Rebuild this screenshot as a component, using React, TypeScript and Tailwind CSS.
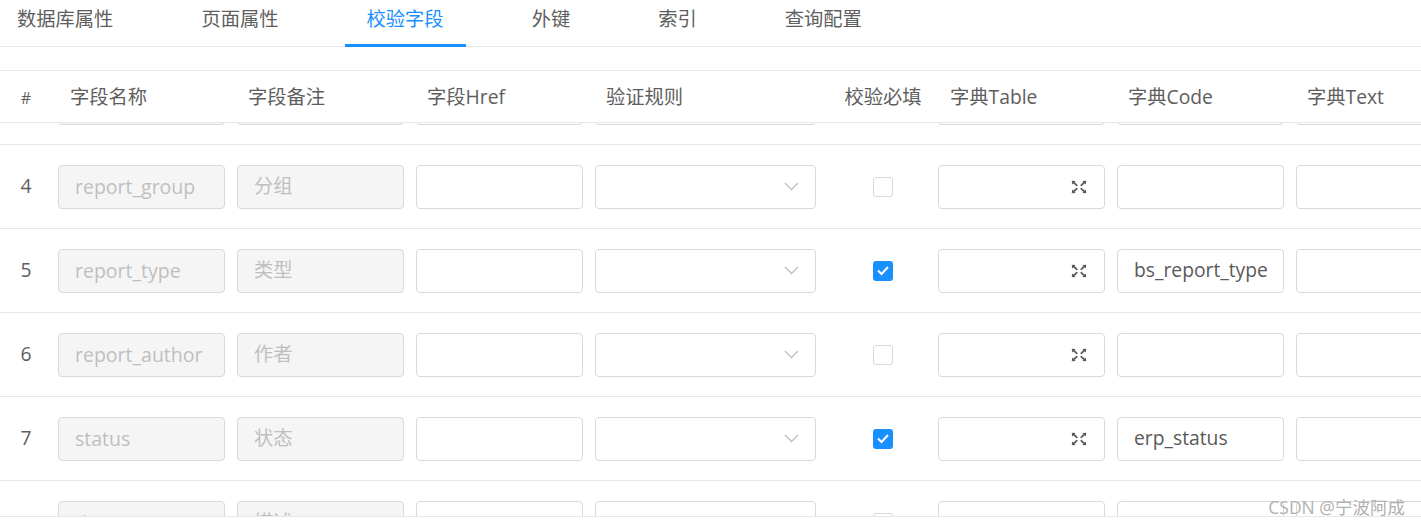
import React from "react";

const FONT = "'Open Sans', 'Noto Sans CJK SC', 'Noto Sans', sans-serif";

type Row = {
  n: string;
  name: string;
  remark: string;
  checked: boolean;
  code: string;
};

const rows: Row[] = [
  { n: "", name: "", remark: "", checked: false, code: "" },
  { n: "4", name: "report_group", remark: "分组", checked: false, code: "" },
  { n: "5", name: "report_type", remark: "类型", checked: true, code: "bs_report_type" },
  { n: "6", name: "report_author", remark: "作者", checked: false, code: "" },
  { n: "7", name: "status", remark: "状态", checked: true, code: "erp_status" },
  { n: "", name: "description", remark: "描述", checked: false, code: "" },
];

const tabs = ["数据库属性", "页面属性", "校验字段", "外键", "索引", "查询配置"];

function Box({
  children,
  disabled,
  className = "",
}: {
  children?: React.ReactNode;
  disabled?: boolean;
  className?: string;
}) {
  return (
    <div
      className={
        "h-[44px] w-full rounded-[4px] border border-[#d9d9d9] px-[16px] flex items-center whitespace-nowrap overflow-hidden " +
        (disabled ? "bg-[#f5f5f5] text-[#bfbfbf] " : "bg-white text-[#595959] ") +
        className
      }
    >
      {children}
    </div>
  );
}

function Chevron() {
  return (
    <svg width="15" height="9" viewBox="0 0 15 9" className="ml-auto shrink-0">
      <path d="M1 1 L7.5 7.5 L14 1" fill="none" stroke="#bfbfbf" strokeWidth="1.3" />
    </svg>
  );
}

function ExpandIcon() {
  return (
    <svg width="16" height="14" viewBox="0 0 16 14" className="ml-auto shrink-0">
      <g stroke="#595959" strokeWidth="1.7" fill="none" strokeLinecap="round">
        <path d="M2.2 2 L5.8 5.3" />
        <path d="M13.8 2 L10.2 5.3" />
        <path d="M2.2 12 L5.8 8.7" />
        <path d="M13.8 12 L10.2 8.7" />
      </g>
      <g fill="#595959">
        <path d="M0.8 0.8 L4.6 1.1 L1.1 4.6 Z" />
        <path d="M15.2 0.8 L11.4 1.1 L14.9 4.6 Z" />
        <path d="M0.8 13.2 L4.6 12.9 L1.1 9.4 Z" />
        <path d="M15.2 13.2 L11.4 12.9 L14.9 9.4 Z" />
      </g>
    </svg>
  );
}

function Checkbox({ checked }: { checked: boolean }) {
  if (checked) {
    return (
      <div className="w-[20px] h-[20px] shrink-0 rounded-[3px] bg-[#1890ff] flex items-center justify-center">
        <svg width="14" height="11" viewBox="0 0 14 11">
          <path d="M2 5.5 L5.5 9 L12 2" fill="none" stroke="#fff" strokeWidth="2" />
        </svg>
      </div>
    );
  }
  return <div className="w-[20px] h-[20px] shrink-0 rounded-[3px] border border-[#d9d9d9] bg-white" />;
}

const cols = "grid grid-cols-[52px_179px_179px_179px_233px_110px_179px_179px_179px]";

export default function App() {
  return (
    <div
      className="relative w-[1421px] h-[525px] overflow-hidden bg-white text-[19.3px] text-[#5e5e5e]"
      style={{ fontFamily: FONT }}
    >
      {/* Tabs */}
      <div className="h-[47px] border-b border-[#e8e8e8] flex">
        <div className="flex gap-[44px] ml-[-5px] h-full">
          {tabs.map((t, i) => (
            <div
              key={t}
              className={
                "relative h-full px-[22px] pb-[8px] flex items-center whitespace-nowrap " +
                (i === 2 ? "text-[#1890ff]" : "text-[#5e5e5e]")
              }
            >
              {t}
              {i === 2 && (
                <div className="absolute left-0 right-0 bottom-[-1px] h-[3px] bg-[#1890ff]" />
              )}
            </div>
          ))}
        </div>
      </div>

      <div className="h-[23px]" />

      {/* Table */}
      <div className="border-t border-[#e8e8e8]">
        {/* Header */}
        <div className={cols + " h-[52px] border-b border-[#e8e8e8] items-center whitespace-nowrap pt-[2px]"}>
          <div className="text-center text-[16px]">#</div>
          <div className="pl-[18px]">字段名称</div>
          <div className="pl-[17px]">字段备注</div>
          <div className="pl-[17px]">字段Href</div>
          <div className="pl-[17px]">验证规则</div>
          <div className="pl-[12px] flex justify-center">校验必填</div>
          <div className="pl-[18px]">字典Table</div>
          <div className="pl-[17px]">字典Code</div>
          <div className="pl-[17px]">字典Text</div>
        </div>

        {/* Body (scrolled) */}
        <div className="h-[394px] overflow-hidden border-b border-[#e8e8e8]">
          <div className="mt-[-62px]">
            {rows.map((r, idx) => (
              <div key={idx} className={cols + " h-[84px] border-b border-[#e8e8e8] items-center"}>
                <div className="text-center">{r.n}</div>
                <div className="px-[6px]">
                  <Box disabled className="text-[19.5px]">{r.name}</Box>
                </div>
                <div className="px-[6px]">
                  <Box disabled>{r.remark}</Box>
                </div>
                <div className="px-[6px]">
                  <Box />
                </div>
                <div className="px-[6px]">
                  <Box className="pr-[16px]">
                    <Chevron />
                  </Box>
                </div>
                <div className="pl-[12px] flex justify-center">
                  <Checkbox checked={r.checked} />
                </div>
                <div className="px-[6px]">
                  <Box className="pr-[17px]">
                    <ExpandIcon />
                  </Box>
                </div>
                <div className="px-[6px]">
                  <Box>{r.code}</Box>
                </div>
                <div className="px-[6px]">
                  <Box />
                </div>
              </div>
            ))}
          </div>
        </div>
      </div>

      {/* Watermark */}
      <div className="absolute right-[16px] top-[494px] text-[17.5px] text-[#b0b0b0] whitespace-nowrap">
        CSDN @宁波阿成
      </div>
    </div>
  );
}
